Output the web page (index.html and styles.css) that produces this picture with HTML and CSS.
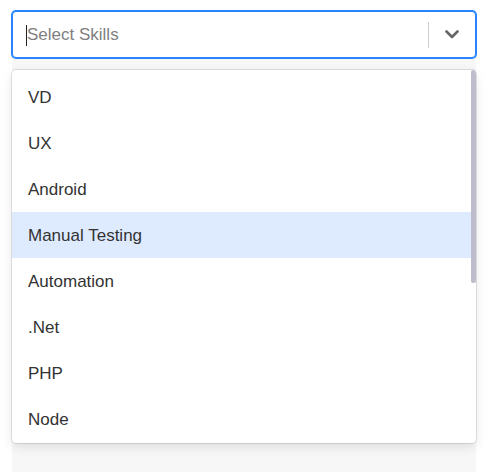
FILE: index.html
```html
<!DOCTYPE html>
<html lang="en">
<head>
<meta charset="utf-8">
<title>Select Skills</title>
<link rel="stylesheet" href="styles.css">
</head>
<body>
<div class="page">
  <div class="select">
    <div class="control">
      <div class="value">
        <span class="caret"></span>
        <span class="placeholder">Select Skills</span>
      </div>
      <span class="separator"></span>
      <div class="indicator">
        <svg width="14" height="9" viewBox="0 0 14 9" aria-hidden="true">
          <polyline points="1.5,1.5 7,7 12.5,1.5" fill="none" stroke="#666666" stroke-width="2.6" stroke-linecap="round" stroke-linejoin="round"/>
        </svg>
      </div>
    </div>
    <div class="below"></div>
    <div class="menu">
      <ul class="list">
        <li class="option">VD</li>
        <li class="option">UX</li>
        <li class="option">Android</li>
        <li class="option focused">Manual Testing</li>
        <li class="option">Automation</li>
        <li class="option">.Net</li>
        <li class="option">PHP</li>
        <li class="option">Node</li>
      </ul>
      <div class="scroll-thumb"></div>
    </div>
  </div>
</div>
</body>
</html>
```

FILE: styles.css
```css
html, body {
  margin: 0;
  padding: 0;
  background: #ffffff;
  font-family: "Liberation Sans", Arial, sans-serif;
  overflow: hidden;
}

.page {
  padding: 11px 21px 0 12px;
  height: 472px;
  box-sizing: border-box;
}

.select {
  position: relative;
  width: 464px;
}

.control {
  display: flex;
  align-items: center;
  height: 47px;
  box-sizing: border-box;
  border: 1px solid #2684ff;
  box-shadow: 0 0 0 1px #2684ff;
  border-radius: 4px;
  background: #ffffff;
}

.value {
  flex: 1;
  display: flex;
  align-items: center;
  padding: 1px 0 0 13px;
}

.caret {
  width: 1px;
  height: 21px;
  background: #222222;
}

.placeholder {
  font-size: 17px;
  color: #808080;
}

.separator {
  width: 1px;
  height: 26px;
  background: #cccccc;
}

.indicator {
  width: 46px;
  display: flex;
  align-items: center;
  justify-content: center;
}

.below {
  margin-top: 1px;
  height: 420px;
  background: #f7f7f7;
}

.menu {
  position: absolute;
  top: 59px;
  left: 0;
  right: 0;
  height: 373px;
  background: #ffffff;
  border-radius: 4px;
  box-shadow: 0 0 0 1px rgba(0, 0, 0, 0.1), 0 4px 11px rgba(0, 0, 0, 0.1);
  overflow: hidden;
}

.list {
  list-style: none;
  margin: 0 5px 0 0;
  padding: 4px 0 0;
}

.option {
  height: 46px;
  box-sizing: border-box;
  display: flex;
  align-items: center;
  padding: 2px 16px 0;
  font-size: 17px;
  color: #333333;
}

.option.focused {
  background: #deebff;
}

.scroll-thumb {
  position: absolute;
  top: 0;
  right: 0;
  width: 5px;
  height: 213px;
  background: #bfbdcd;
  border-radius: 2px;
}
```
